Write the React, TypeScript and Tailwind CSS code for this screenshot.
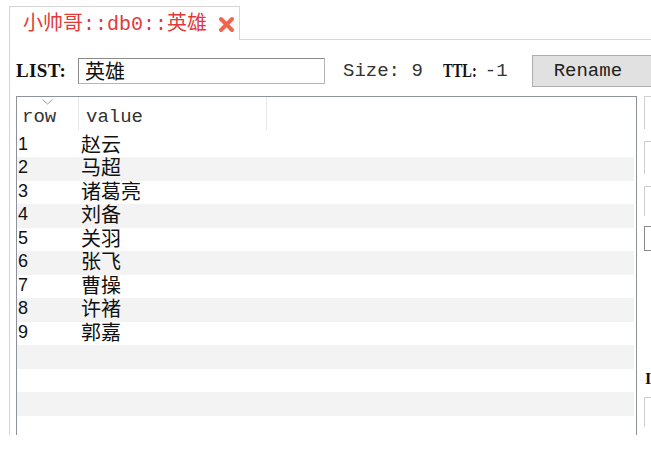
import React from "react";

const rows = ["赵云", "马超", "诸葛亮", "刘备", "关羽", "张飞", "曹操", "许褚", "郭嘉", "", "", "", ""];

const cjk = { fontFamily: '"Noto Sans CJK SC", sans-serif' };
const mono = { fontFamily: '"Liberation Mono", "Noto Sans CJK SC", monospace' };

export default function App() {
  return (
    <div className="w-[651px] h-[449px] bg-white overflow-hidden">
      <div className="h-[435px] ml-[9px] flex flex-col overflow-hidden">
        {/* tab strip */}
        <div className="flex items-end pt-[6px] h-[40px] shrink-0">
          <div className="h-[34px] w-[231px] shrink-0 border-t border-l border-r border-[#d6d6d6] bg-white flex items-center pl-[13px] gap-[11px]">
            <span className="text-[20px] leading-none text-[#e23a3a] whitespace-nowrap" style={mono}>
              <span style={cjk}>小帅哥</span>::db0::<span style={cjk}>英雄</span>
            </span>
            <svg width="17" height="17" viewBox="0 0 17 17" className="mt-[1px]">
              <path d="M3 3 L14 14 M14 3 L3 14" stroke="#f0654d" strokeWidth="4" strokeLinecap="round" />
            </svg>
          </div>
          <div className="flex-1 border-b border-[#d6d6d6]" />
        </div>

        {/* panel */}
        <div className="flex-1 border-l border-[#d6d6d6] flex flex-col pl-[6px] pt-[15px] min-h-0">
          {/* toolbar */}
          <div className="flex items-center h-[32px] shrink-0 overflow-hidden">
            <span className="shrink-0 text-[19px] font-bold text-[#111] w-[62px] tracking-[0.4px]" style={{ fontFamily: '"Liberation Serif", serif' }}>
              LIST:
            </span>
            <div className="shrink-0 w-[247px] h-[26px] border border-[#8a8a8a] border-b-[#b5b5b5] border-r-[#b5b5b5] flex items-center pl-[6px]">
              <span className="text-[20px] leading-none text-[#111]" style={cjk}>英雄</span>
            </div>
            <span className="shrink-0 ml-[18px] text-[19px] text-[#333] whitespace-nowrap" style={mono}>
              Size: 9
            </span>
            <span className="shrink-0 ml-[20px] w-[34px] overflow-visible whitespace-nowrap">
              <span className="inline-block origin-left scale-x-[0.76] text-[19px] font-bold text-[#111]" style={{ fontFamily: '"Liberation Serif", serif' }}>
                TTL:
              </span>
            </span>
            <span className="shrink-0 ml-[8px] text-[19px] text-[#333]" style={mono}>-1</span>
            <div className="shrink-0 ml-[24px] h-[32px] w-[130px] bg-[#e1e1e1] border border-[#adadad] flex items-center pl-[21px]">
              <span className="text-[19px] text-[#222]" style={mono}>Rename</span>
            </div>
          </div>

          {/* table + right column */}
          <div className="flex mt-[9px] flex-1 min-h-0">
            <div className="w-[621px] shrink-0 border-t border-l border-r border-[#8d929b] flex flex-col overflow-hidden">
              <div className="h-[36.5px] shrink-0 flex bg-white">
                <div className="w-[62px] border-r border-[#e5e5e5] relative flex items-center pl-[5px] pt-[7px] h-[33px]">
                  <svg width="11" height="6" viewBox="0 0 11 6" className="absolute left-[25px] top-[2px]">
                    <path d="M0.5 0.5 L5.5 5 L10.5 0.5" stroke="#9aa0a8" strokeWidth="1" fill="none" />
                  </svg>
                  <span className="text-[19px] text-[#333]" style={mono}>row</span>
                </div>
                <div className="w-[188px] border-r border-[#e5e5e5] flex items-center pl-[7px] pt-[7px] h-[33px]">
                  <span className="text-[19px] text-[#333]" style={mono}>value</span>
                </div>
              </div>
              {rows.map((v, i) => (
                <div key={i} className={`h-[23.5px] shrink-0 flex items-center pb-[3px] ${i % 2 === 1 ? "bg-[#f3f3f3]" : "bg-white"} mr-[2px]`}>
                  <div className="w-[62px] pl-[1px] text-[18px] leading-none text-[#111]" style={{ fontFamily: '"Liberation Sans", sans-serif' }}>
                    {v ? i + 1 : ""}
                  </div>
                  <div className="pl-[2px] text-[20px] leading-none text-[#111]" style={cjk}>{v}</div>
                </div>
              ))}
            </div>
            <div className="ml-[7px] flex flex-col">
              <div className="h-[33px] w-[10px] border-l border-t border-[#cfcfcf]" />
              <div className="mt-[12px] h-[33px] w-[10px] border-l border-t border-[#cfcfcf]" />
              <div className="mt-[12px] h-[30px] w-[10px] border-l border-t border-[#cfcfcf]" />
              <div className="mt-[10px] h-[25px] w-[10px] border-l border-t border-b border-[#8a8a8a]" />
              <div className="mt-[120px] text-[16px] font-bold leading-none text-[#111] pl-[1px]" style={{ fontFamily: '"Liberation Serif", serif' }}>I</div>
              <div className="mt-[10px] h-[30px] w-[10px] border-l border-t border-[#cfcfcf]" />
            </div>
          </div>
        </div>
      </div>
    </div>
  );
}
